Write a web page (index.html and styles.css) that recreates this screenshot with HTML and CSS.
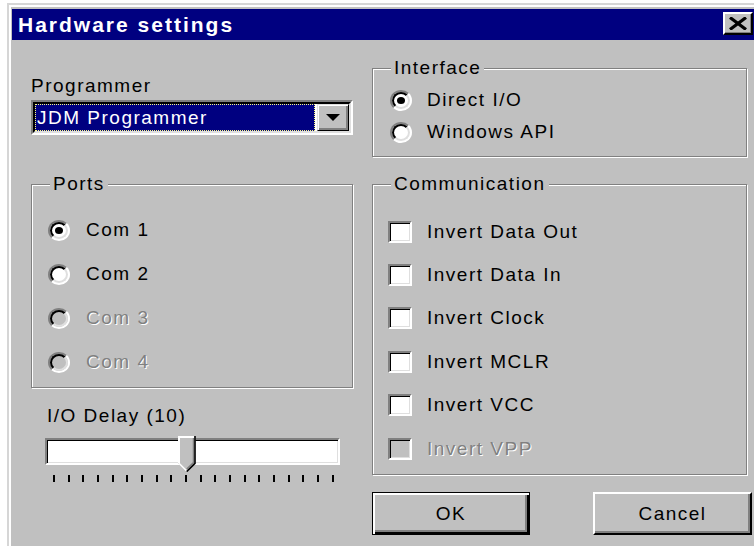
FILE: index.html
```html
<!DOCTYPE html>
<html lang="en">
<head>
<meta charset="utf-8">
<title>Hardware settings</title>
<link rel="stylesheet" href="styles.css">
</head>
<body>
<div class="window">
  <div class="titlebar">
    <span class="title">Hardware settings</span>
    <button class="close" aria-label="Close">
      <svg width="22" height="13" viewBox="0 0 22 13"><path d="M3 0.5 L19 12.5 M19 0.5 L3 12.5" stroke="#000" stroke-width="3.2" fill="none"/></svg>
    </button>
  </div>

  <div class="content">
    <div class="col">
      <div class="label prog-label">Programmer</div>
      <div class="combo">
        <div class="combo-inner">
          <div class="combo-value"><span>JDM Programmer</span></div>
          <div class="combo-btn">
            <svg width="14" height="7" viewBox="0 0 14 7"><path d="M0 0 H14 L7 7 Z" fill="#000"/></svg>
          </div>
        </div>
      </div>

      <fieldset class="group ports">
        <legend>Ports</legend>
        <div class="opt"><span class="radio checked"></span><span>Com 1</span></div>
        <div class="opt"><span class="radio"></span><span>Com 2</span></div>
        <div class="opt disabled"><span class="radio"></span><span>Com 3</span></div>
        <div class="opt disabled"><span class="radio"></span><span>Com 4</span></div>
      </fieldset>

      <div class="label delay-label">I/O Delay (10)</div>
      <div class="slider">
        <div class="track"></div>
        <svg class="thumb" width="18" height="36" viewBox="0 0 18 36">
          <path d="M0 0 H17.5 V27 L8.75 35.5 L0 27 Z" fill="#c0c0c0"/>
          <path d="M1 27 V1 H16.5" stroke="#fff" stroke-width="2" fill="none"/>
          <path d="M15.5 2 V26.5 L8.75 33" stroke="#808080" stroke-width="1.5" fill="none"/>
          <path d="M17 0 V27.3 L8.75 35.5" stroke="#000" stroke-width="1.6" fill="none"/>
          <path d="M1 27.3 L8.2 34.5" stroke="#fff" stroke-width="1.5" fill="none"/>
        </svg>
      </div>
      <div class="ticks">
        <i></i><i></i><i></i><i></i><i></i><i></i><i></i><i></i><i></i><i></i>
        <i></i><i></i><i></i><i></i><i></i><i></i><i></i><i></i><i></i><i></i>
      </div>
    </div>

    <div class="col">
      <fieldset class="group iface">
        <legend>Interface</legend>
        <div class="opt"><span class="radio checked"></span><span>Direct I/O</span></div>
        <div class="opt"><span class="radio"></span><span>Windows API</span></div>
      </fieldset>

      <fieldset class="group comm">
        <legend>Communication</legend>
        <div class="opt"><span class="check"></span><span>Invert Data Out</span></div>
        <div class="opt"><span class="check"></span><span>Invert Data In</span></div>
        <div class="opt"><span class="check"></span><span>Invert Clock</span></div>
        <div class="opt"><span class="check"></span><span>Invert MCLR</span></div>
        <div class="opt"><span class="check"></span><span>Invert VCC</span></div>
        <div class="opt disabled"><span class="check"></span><span>Invert VPP</span></div>
      </fieldset>

      <div class="buttons">
        <button class="btn default">OK</button>
        <button class="btn">Cancel</button>
      </div>
    </div>
  </div>
</div>
</body>
</html>
```

FILE: styles.css
```css
html, body {
  margin: 0;
  padding: 0;
  background: #ffffff;
  overflow: hidden;
}

/* dialog frame */
.window {
  box-sizing: border-box;
  margin: 3px 0 0 7px;
  width: 747px;
  height: 543px;
  border-top: 2px solid #d6d6d6;
  border-left: 2px solid #d6d6d6;
  box-shadow: inset 2px 2px 0 #ffffff;
  padding: 4px 0 0 3px;
  background: #c0c0c0;
  font-family: "Liberation Sans", Arial, sans-serif;
  font-size: 19px;
  line-height: 20px;
  letter-spacing: 1.5px;
  color: #000;
}

/* caption */
.titlebar {
  height: 31px;
  background: #000080;
  display: flex;
  justify-content: space-between;
  align-items: flex-start;
}
.title {
  color: #fff;
  font-weight: bold;
  font-size: 21px;
  letter-spacing: 2px;
  line-height: 31px;
  padding-left: 6px;
}
.close {
  box-sizing: border-box;
  margin: 3px 1px 0 0;
  width: 30px;
  height: 23px;
  padding: 0;
  background: #c0c0c0;
  border: 2px solid;
  border-color: #ffffff #000000 #000000 #ffffff;
  box-shadow: inset -1px -1px 0 #808080;
  display: flex;
  align-items: center;
  justify-content: center;
}

/* two columns of controls */
.content {
  display: grid;
  grid-template-columns: 322px 375px;
  column-gap: 19px;
  padding-left: 19px;
  align-items: start;
}
.col {
  display: flex;
  flex-direction: column;
  align-items: stretch;
}

.label { height: 20px; }
.prog-label { margin-top: 36px; }
.delay-label { margin-top: 18px; padding-left: 16px; }

/* combo box */
.combo {
  box-sizing: border-box;
  margin-top: 4px;
  height: 35px;
  border: 2px solid;
  border-color: #808080 #ffffff #ffffff #808080;
}
.combo-inner {
  height: 100%;
  box-sizing: border-box;
  border: 2px solid;
  border-color: #000000 #dfdfdf #dfdfdf #000000;
  background: #fff;
  display: flex;
  gap: 2px;
}
.combo-value {
  flex: 1;
  background: #000080;
  color: #fff;
  outline: 1px dotted #ffff80;
  outline-offset: -1px;
  padding-left: 2px;
  display: flex;
  align-items: center;
}
.combo-btn {
  box-sizing: border-box;
  width: 32px;
  background: #c0c0c0;
  border: 1px solid;
  border-color: #dfdfdf #000000 #000000 #dfdfdf;
  box-shadow: inset 1px 1px 0 #fff, inset -2px -2px 0 #808080;
  display: flex;
  align-items: center;
  justify-content: center;
}

/* etched group boxes */
.group {
  margin: 0;
  padding: 0;
  min-width: 0;
  border: 1px solid #808080;
  box-shadow: inset 1px 1px 0 #ffffff, 1px 1px 0 #ffffff;
}
.group legend {
  margin-left: 18px;
  padding: 0 3px;
  background: #c0c0c0;
  line-height: 20px;
}
.ports { margin-top: 39px; padding: 14px 0 3px 0; }
.ports .opt { height: 44px; gap: 16px; padding-left: 16px; }

.iface { margin-top: 18px; padding: 6px 0 8px 0; }
.iface .opt { height: 32px; gap: 15px; padding-left: 17px; }

.comm { margin-top: 17px; padding: 16px 0 4px 0; }
.comm .opt { height: 43.4px; gap: 15px; padding-left: 15px; }

.opt {
  display: flex;
  align-items: center;
}
.opt.disabled {
  color: #808080;
  text-shadow: 1px 1px 0 #ffffff;
}

/* radio button */
.radio {
  position: relative;
  flex: none;
  box-sizing: border-box;
  width: 22px;
  height: 21px;
  border-radius: 50%;
  background: #fff;
  border: 2px solid;
  border-color: #808080 #ffffff #ffffff #808080;
}
.radio::before {
  content: "";
  position: absolute;
  inset: 0;
  border-radius: 50%;
  border: 2px solid;
  border-color: #000000 #dfdfdf #dfdfdf #000000;
}
.radio.checked::after {
  content: "";
  position: absolute;
  left: 5px;
  top: 5px;
  width: 8px;
  height: 7px;
  border-radius: 50%;
  background: #000;
}
.disabled .radio { background: #c0c0c0; }

/* check box */
.check {
  flex: none;
  box-sizing: border-box;
  width: 24px;
  height: 22px;
  background: #fff;
  border: 2px solid;
  border-color: #808080 #ffffff #ffffff #808080;
  box-shadow: inset 1px 1px 0 #000, inset -1px -1px 0 #dfdfdf;
}
.disabled .check { background: #c0c0c0; }

/* trackbar */
.slider {
  position: relative;
  margin: 12px 13px 0 14px;
  height: 27px;
}
.track {
  box-sizing: border-box;
  height: 27px;
  background: #fff;
  border: 2px solid;
  border-color: #808080 #ffffff #ffffff #808080;
  box-shadow: inset 1px 1px 0 #000, inset -1px -1px 0 #dfdfdf;
}
.thumb {
  position: absolute;
  left: 133px;
  top: -2px;
}
.ticks {
  margin: 10px 0 0 22px;
  width: 281px;
  display: flex;
  justify-content: space-between;
}
.ticks i {
  display: block;
  width: 2px;
  height: 7px;
  background: #000;
}

/* push buttons */
.buttons {
  margin: 17px -5px 0 0;
  display: flex;
  justify-content: space-between;
}
.btn {
  box-sizing: border-box;
  width: 159px;
  height: 43px;
  padding: 0;
  font: inherit;
  letter-spacing: 1.5px;
  color: #000;
  background: #c0c0c0;
  border: 2px solid;
  border-color: #ffffff #000000 #000000 #ffffff;
  box-shadow: inset -2px -2px 0 #808080;
}
.btn.default {
  width: 158px;
  border: 1px solid #000;
  box-shadow: inset 2px 2px 0 #fff, inset -2px -2px 0 #000, inset -4px -4px 0 #808080;
}
```
